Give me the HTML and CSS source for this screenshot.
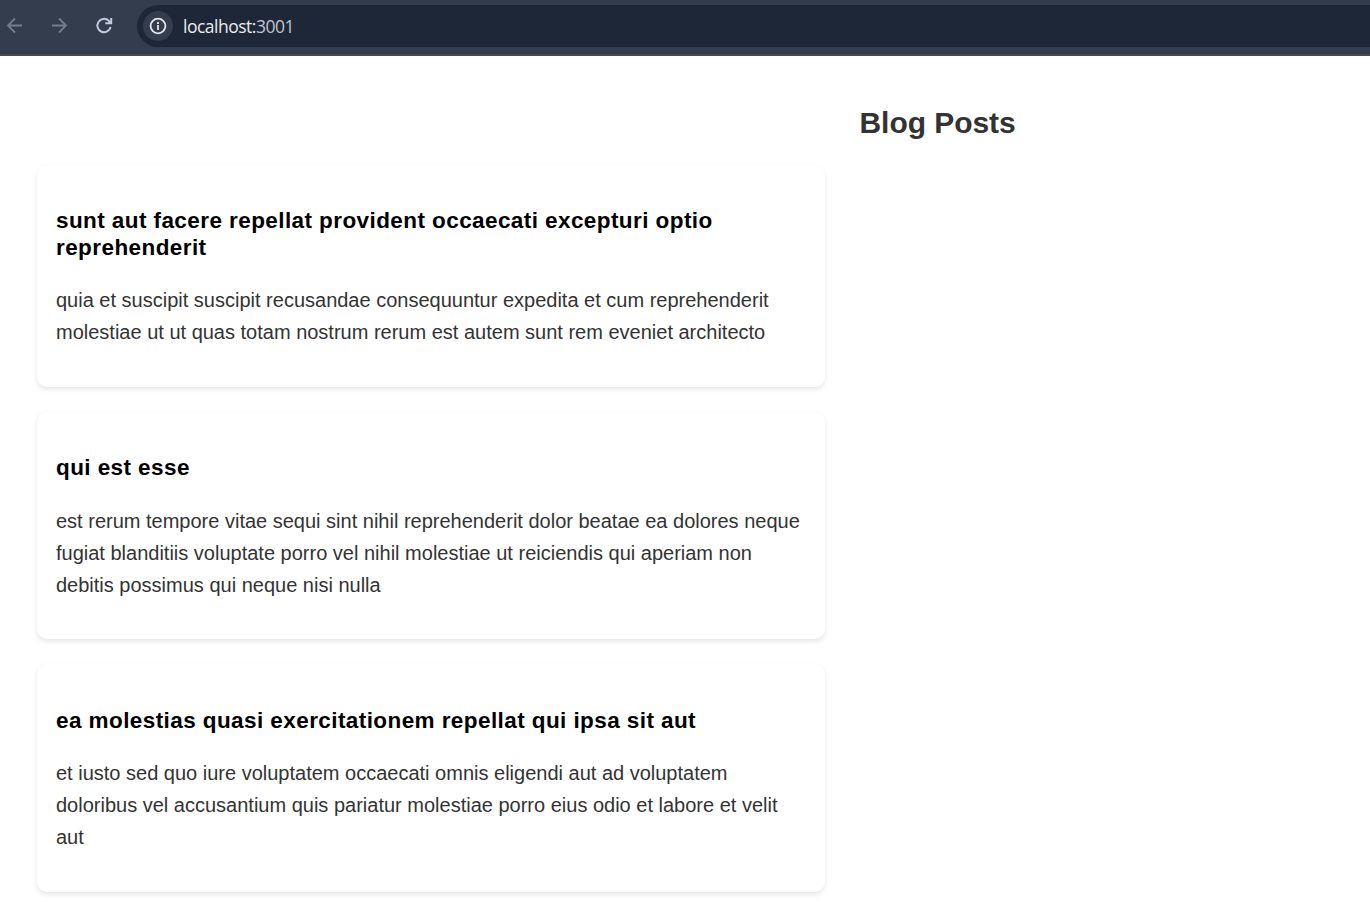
FILE: index.html
```html
<!DOCTYPE html>
<html lang="en">
<head>
<meta charset="utf-8">
<title>Blog Posts</title>
<link rel="stylesheet" href="styles.css">
</head>
<body>
<header class="toolbar">
  <nav class="nav">
    <svg class="icon dim" viewBox="0 0 20 20"><path d="M18 9.500H4.500M11 2.500L4 9.500l7 7"/></svg>
    <svg class="icon dim" viewBox="0 0 20 20"><path d="M3 9.500H16.500M10 2.500l7 7-7 7"/></svg>
    <svg class="icon" viewBox="0 0 20 20"><path d="M16.600 11A6.700 6.700 0 1 1 14.600 4.600L16.400 6.800M17.200 2V7.300H11.300"/></svg>
  </nav>
  <div class="address">
    <span class="site-info"><svg class="info" viewBox="0 0 18 18"><circle cx="9" cy="9" r="7.400"/><path d="M9 8v5M9 5v2"/></svg></span>
    <span class="url">localhost:<span class="port">3001</span></span>
  </div>
</header>
<main class="blog">
  <h1 class="heading">Blog Posts</h1>
  <section class="posts">
    <article class="post">
      <h2 class="title">sunt aut facere repellat provident occaecati excepturi optio<br>reprehenderit</h2>
      <p class="body">quia et suscipit suscipit recusandae consequuntur expedita et cum reprehenderit<br>molestiae ut ut quas totam nostrum rerum est autem sunt rem eveniet architecto</p>
    </article>
    <article class="post">
      <h2 class="title">qui est esse</h2>
      <p class="body">est rerum tempore vitae sequi sint nihil reprehenderit dolor beatae ea dolores neque<br>fugiat blanditiis voluptate porro vel nihil molestiae ut reiciendis qui aperiam non<br>debitis possimus qui neque nisi nulla</p>
    </article>
    <article class="post">
      <h2 class="title">ea molestias quasi exercitationem repellat qui ipsa sit aut</h2>
      <p class="body">et iusto sed quo iure voluptatem occaecati omnis eligendi aut ad voluptatem<br>doloribus vel accusantium quis pariatur molestiae porro eius odio et labore et velit<br>aut</p>
    </article>
  </section>
</main>
</body>
</html>
```
FILE: styles.css
```css
* { box-sizing: border-box; }
body {
  margin: 0;
  height: 902px;
  overflow: hidden;
  background: #fff;
  color: #333;
  font-family: "Liberation Sans", Arial, sans-serif;
}
.toolbar {
  display: flex;
  height: 56px;
  padding-top: 5px;
  background: #343d4e;
  border-bottom: 2px solid #48494d;
}
.nav {
  display: flex;
  gap: 25px;
  width: 137px;
  padding: 11px 0 0 4px;
}
.icon {
  width: 20px;
  height: 20px;
  fill: none;
  stroke: #c1cae0;
  stroke-width: 2;
}
.dim { stroke: #747b8a; stroke-width: 1.8; }
.address {
  display: flex;
  flex: 1;
  align-items: center;
  height: 42px;
  padding-left: 6px;
  background: #1e2737;
  border-radius: 21px 0 0 21px;
}
.site-info {
  display: flex;
  align-items: center;
  justify-content: center;
  width: 30px;
  height: 30px;
  margin-right: 10px;
  background: #343d4e;
  border-radius: 50%;
}
.info {
  width: 18px;
  height: 18px;
  fill: none;
  stroke: #e3e6ec;
  stroke-width: 1.8;
}
.url {
  color: #e9ebf0;
  font: 17.5px/24px "Open Sans", "Noto Sans", sans-serif;
  letter-spacing: -0.5px;
}
.port { color: #bfc4ce; }
.blog { padding: 50px 37px 0; }
.heading {
  margin: 0 0 25px;
  padding-left: 822.5px;
  font-size: 30px;
  line-height: 33px;
  padding-bottom: 1px;
  letter-spacing: -0.05px;
}
.posts {
  display: flex;
  flex-direction: column;
  gap: 25px;
  width: 788px;
}
.post {
  padding: 42.25px 19px 38.83px;
  background: #fff;
  border-radius: 10px;
  box-shadow: 0 2.5px 5px rgba(0, 0, 0, 0.09);
  white-space: nowrap;
}
.title {
  margin: 0 0 23.15px;
  color: #000;
  font-size: 22.5px;
  line-height: 27px;
  letter-spacing: 0.42px;
}
.body {
  margin: 0;
  font-size: 20px;
  line-height: 32px;
}
```
